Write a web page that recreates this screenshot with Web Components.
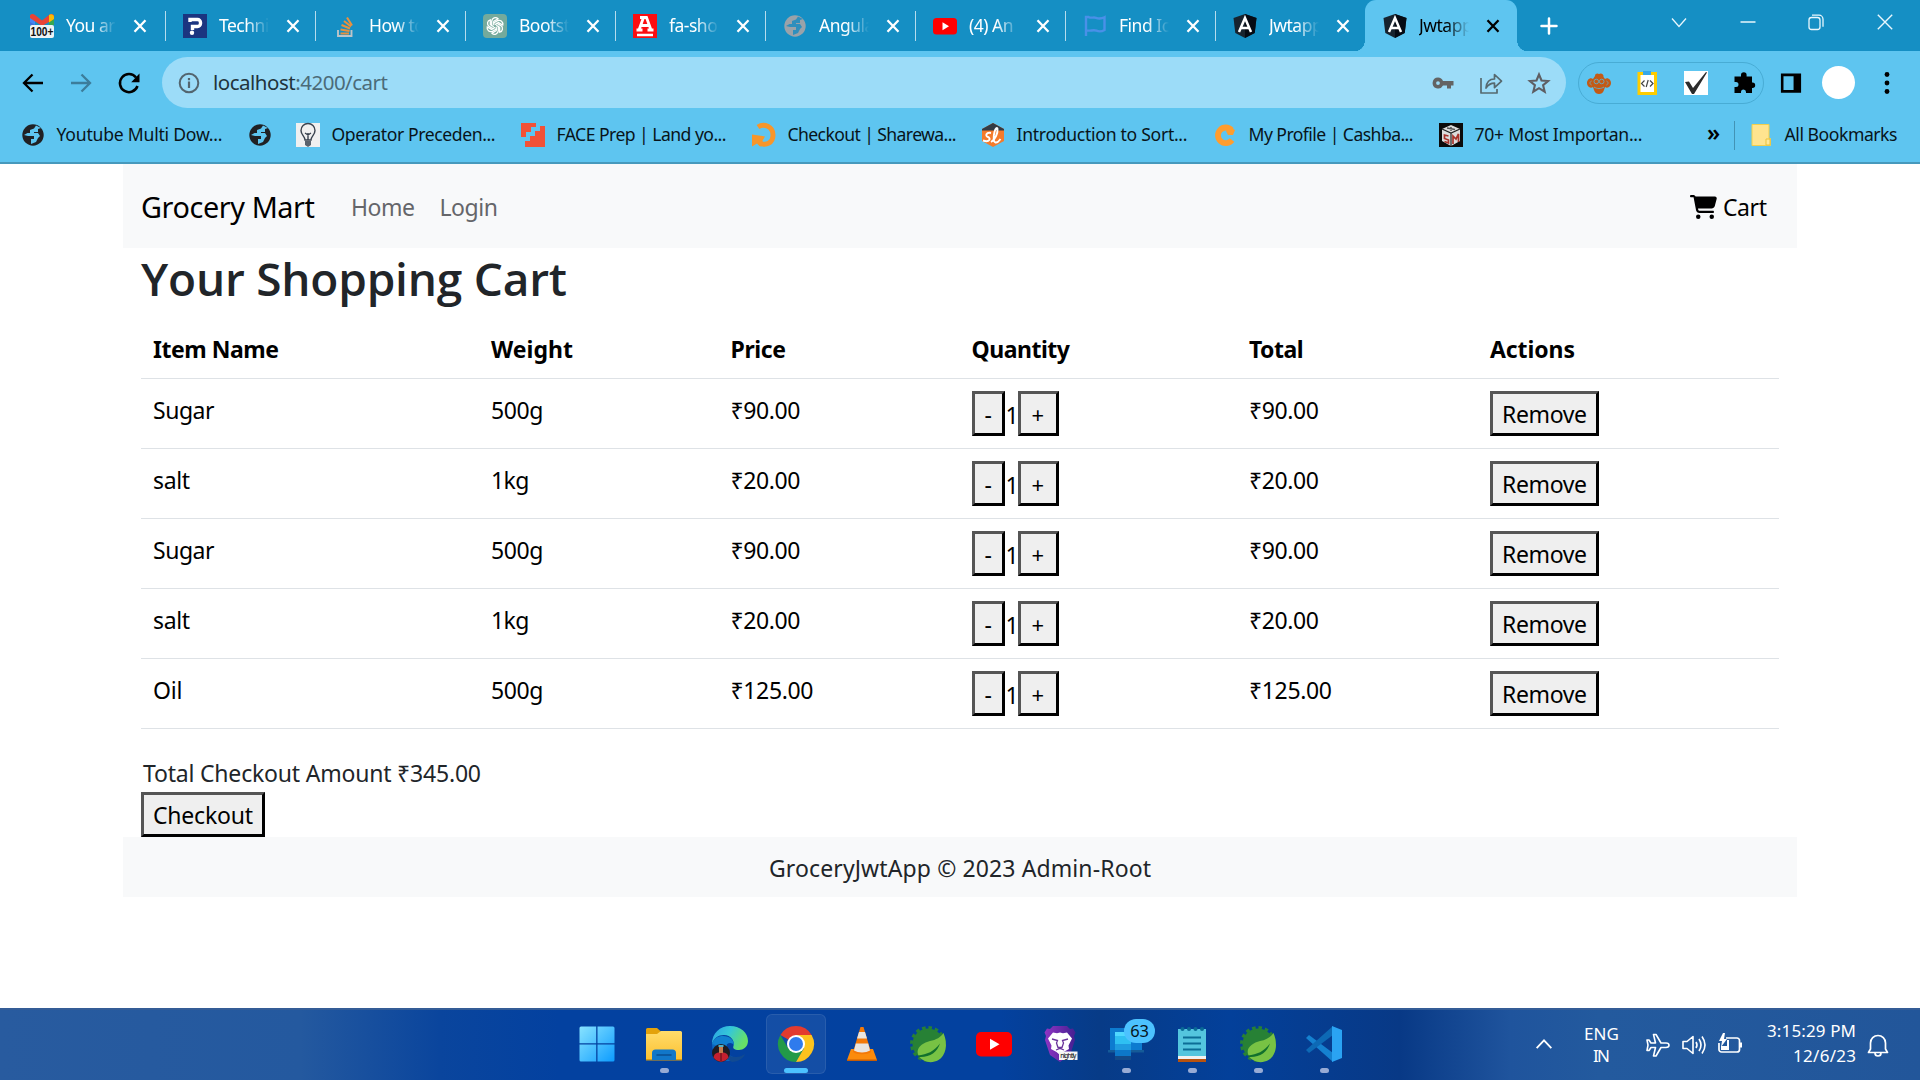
<!DOCTYPE html>
<html lang="en">
<head>
<meta charset="utf-8">
<title>Jwtapp</title>
<style>
html,body{margin:0;padding:0}
body{width:1920px;height:1080px;overflow:hidden;background:#fff;font-family:"Noto Sans","Open Sans",sans-serif;display:flex;flex-direction:column}
</style>
</head>
<body>
<browser-chrome></browser-chrome>
<shop-page></shop-page>
<task-bar></task-bar>
<script>
const PETAL = '<path d="M8.700 12.300V7.100a3.700 3.700 0 0 1 6.300-2.300l-4.200 2.500v4"/>';
const ICONS = {
gmail:`<path d="M0 2v9h5V6z" fill="#4285f4"/><path d="M24 2v9h-5V6z" fill="#34a853"/><path d="M0 8l5 3H0z" fill="#3f6fd8"/><path d="M0 1.500C1-.500 3.500-.500 5 1l7 5.500V12L0 4z" fill="#e94235"/><path d="M24 1.500C23-.500 20.500-.500 19 1l-7 5.500V12l12-7z" fill="#e94235"/><path d="M19 1c2-1.500 5-.500 5 2v2l-5 3.500z" fill="#fbbc04"/><rect y="11" width="24" height="13" rx="2" fill="#eef3f5"/><text x="12" y="22.300" font-size="13" font-family="Liberation Sans" font-weight="700" text-anchor="middle" textLength="23" lengthAdjust="spacingAndGlyphs" fill="#111">100+</text>`,
tech:`<rect width="24" height="24" fill="#1b3580"/><path d="M7 8V5.500h7.500a3 3 0 0 1 3 3v1a3 3 0 0 1-3 3H9.500v3.500" fill="none" stroke="#fff" stroke-width="3.400"/><circle cx="9" cy="18.800" r="2.200" fill="#fff"/>`,
stack:`<path d="M5 16v6h13.500V16" fill="none" stroke="#bcc4c8" stroke-width="1.900"/><g stroke="#e8913e" stroke-width="2.100"><path d="M7.500 19.500h8.500M7.500 15.500l9 1.500M8.500 11l8.500 3.500M11 7l7 5.500M14 3.500l5 8"/></g>`,
gpt:`<rect width="24" height="24" rx="4" fill="#74aa9c"/><g fill="none" stroke="#fff" stroke-width="1.300">${[0,60,120,180,240,300].map(a => `<g transform="rotate(${a} 12 12)">${PETAL}</g>`).join('')}</g>`,
fa:`<rect width="24" height="24" fill="#fb0d10"/><path d="M6 16L10.500 3.500h3L18 16M8 11.500h8M3.500 16h6M14.500 16h6M7 3.500h7" fill="none" stroke="#fff" stroke-width="2.800"/><path d="M4 21h16" stroke="#fff" stroke-width="2.500"/>`,
globeg:`<circle cx="12" cy="12" r="10.700" fill="#9aa2a9"/><path d="M15 2.500l-2 3-4 1.500v3H6.500l-3.500 2 4 1h6v3h-3v5l5-2 2-4 2-2-2-3h-4V9h4V6l3-1z" fill="#2f8fbd"/>`,
globe:`<circle cx="12" cy="12" r="10.700" fill="#202124"/><path d="M15 2.500l-2 3-4 1.500v3H6.500l-3.500 2 4 1h6v3h-3v5l5-2 2-4 2-2-2-3h-4V9h4V6l3-1z" fill="#5ec5f0"/>`,
yt:`<rect y="4" width="24" height="16.500" rx="3.500" fill="#f00"/><path d="M9.500 8.300l6.500 3.900-6.500 4z" fill="#fff"/>`,
flag:`<path d="M3 22V3h2.500c2.500 1.500 5 0 7.500.800 3 1.200 5.500 1 8.500-.500v12.700c-3 1.700-5.500 1.700-8 .700-3-1.200-6 .500-10-.200" fill="none" stroke="#4a90e8" stroke-width="2.400"/>`,
ang:`<path d="M12 0l11.500 4-1.800 15L12 24l-9.700-5L.500 4z" fill="#17232e"/><path d="M12 0l11.500 4-1.800 15L12 24z" fill="#050b14"/><path d="M6 18L12 4l6 14M8.500 14h7" fill="none" stroke="#fff" stroke-width="2.500"/>`,
x:`<path d="M6.500 6.200l11 11.600m0-11.600l-11 11.600" stroke="currentColor" stroke-width="2.300"/>`,
plus:`<path d="M12 3v18M3 12h18" stroke="#fff" stroke-width="3" stroke-linecap="round"/>`,
down:`<path d="M5 8.500l7 8 7-8" fill="none" stroke="#e9f7fd" stroke-width="1.300"/>`,
min:`<path d="M4.500 12h15" stroke="#e9f7fd" stroke-width="1.500"/>`,
max:`<rect x="5" y="7.500" width="11" height="12" rx="2.500" fill="none" stroke="#e9f7fd" stroke-width="1.300"/><path d="M8 5.200h7a4 4 0 0 1 4 4v7.500" fill="none" stroke="#e9f7fd" stroke-width="1.300"/>`,
wx:`<path d="M4.800 4.800l14.400 14.400m0-14.400L4.800 19.200" stroke="#e9f7fd" stroke-width="1.400"/>`,
back:`<path d="M22 12H3M11.500 3.500L3 12l8.500 8.500" fill="none" stroke="currentColor" stroke-width="2.300"/>`,
fwd:`<path d="M2 12h19M12.500 3.500L21 12l-8.500 8.500" fill="none" stroke="#3c7d9b" stroke-width="2.300"/>`,
reload:`<path d="M20.500 15A9 9 0 1 1 19 6.500" fill="none" stroke="#000" stroke-width="2.500"/><path d="M22.500 2.500v8.800h-8.300z"/>`,
info:`<circle cx="12" cy="12" r="9.300" fill="none" stroke="#53656f" stroke-width="2"/><path d="M12 10.500V17M12 7v2.200" stroke="#53656f" stroke-width="2.200"/>`,
key:`<path d="M7 6.500a5.500 5.500 0 1 0 5 8h4v3h4v-3h2.500v-4.500H12a5.500 5.500 0 0 0-5-3.500zm0 3.700a1.900 1.900 0 1 1 0 3.800 1.900 1.900 0 0 1 0-3.800z" fill="#636363" fill-rule="evenodd"/>`,
share:`<path d="M2 7v15h16v-4M7 17c.500-6.500 4-9 8.500-9V3.500l7 6.700-7 6.500v-4.500C11 12.300 9 14 7 17z" fill="none" stroke="#56696f" stroke-width="1.700" stroke-linejoin="round"/>`,
star:`<path d="M12 3.500l2.500 6 6.600.500-5 4.200 1.600 6.500-5.700-3.500-5.700 3.500 1.600-6.500-5-4.200 6.600-.500z" fill="none" stroke="#5e5e63" stroke-width="2.100"/>`,
monkey:`<g fill="#c35a15"><path d="M8 5c0-3 3-3 4-2 2-1.500 5 0 4.500 3l1.500 2c3-2 6 1 6 4s-3 6-6 4l-1 3c-1 3-3 4-5 4s-4-1-5-4l-1-3c-3 2-6-1-6-4s3-6 6-4z"/></g><g fill="none" stroke="#6fa5b5" stroke-width="1"><circle cx="9.300" cy="10.500" r="2.300"/><circle cx="14.700" cy="10.500" r="2.300"/><path d="M7 16c3 2 7 2 10 0"/><path d="M4.500 10c-2 1-2 3 0 4M19.500 10c2 1 2 3 0 4"/></g>`,
clip:`<rect x="2.500" y="1" width="19.500" height="23" fill="#fc0"/><rect x="5.500" y="4" width="13.500" height="17" fill="#fff"/><rect x="8" y="0" width="8" height="4" fill="#38a8e8"/><path d="M9.500 9.500L6.500 12.500l3 3M15 9.500l3 3-3 3M13.200 9l-2 7" fill="none" stroke="#444" stroke-width="1.200"/>`,
check:`<rect width="24" height="24" fill="#fff"/><path d="M1 11l4-.500L9 17 22 1l1 .500L10 23H8z" fill="#2b2b2b"/>`,
puzzle:`<path d="M9 4a2.800 2.800 0 0 1 5.600 0v1.500H20v6h.500a2.700 2.700 0 0 1 0 5.400H20V22h-6v-1a2.500 2.500 0 0 0-5 0v1H2.500v-6H4a2.500 2.500 0 0 0 0-5H2.500V5.500H9z"/>`,
side:`<path d="M1 1.500h22v21H1zM3.800 4.500v15h11v-15z" fill-rule="evenodd"/>`,
dots:`<circle cx="12" cy="3.500" r="2.400"/><circle cx="12" cy="12" r="2.400"/><circle cx="12" cy="20.500" r="2.400"/>`,
bulb:`<rect width="24" height="24" fill="#f0f0f0"/><path d="M9 17c0-4-4-5-4-9.500a7 7 0 0 1 14 0C19 12 15 13 15 17zM9.500 19h5M10 21.500h4M12 10v7M9 10l3 2 3-2" fill="none" stroke="#39424e" stroke-width="1.400"/><path d="M9 18h6v4l-3 2-3-2z" fill="#59616b"/>`,
face:`<path d="M0 0h15v4h-5v5H5v5H0z" fill="#f25137"/><path d="M24 3v21H4v-6h5v-5h5V8h5V3z" fill="#f25137"/>`,
shw:`<path d="M6 4C12 0 21 3.500 21 12c0 8-7 11-13 8" fill="none" stroke="#f7962a" stroke-width="5"/><path d="M0 11.500l13 2-3 5 3 4-5 1-3-3-5 3z" fill="#f7962a"/>`,
sort:`<path d="M12 0l11 6v12l-11 6-11-6V6z" fill="#f47b2b"/><path d="M12 0l11 6v1.500H1V6z" fill="#333b45"/><path d="M10 10c-5-1-6 3-3 4s2 6-5 3.500M10 19c4-2 7-9 6.500-13-.300-2-2-1-3 3s-1.500 10 1 10.500 3.500-1.500 5-3.500" fill="none" stroke="#fff" stroke-width="1.900"/>`,
cash:`<path d="M18.500 7a7.800 7.800 0 1 0 .500 10" fill="none" stroke="#ff9d2e" stroke-width="5.800"/><path d="M13 8l4-4 5 3-2 5h-5z" fill="#ff9d2e"/>`,
stm:`<rect width="24" height="24" fill="#0b0b0b"/><path d="M12 2l9 4v12l-9 5-9-5V6z" fill="#ddd"/><path d="M12 10v13M3 6l9 4 9-4" fill="none" stroke="#222" stroke-width="1.200"/><path d="M9.500 13l-4-1v3.500l4 1.500v3l-4-1.500M14 21v-8l3 3 2.500-5v8" stroke="#a9342c" stroke-width="1.700" fill="none"/><path d="M8 5l8 1.500M12 4v4" stroke="#555" stroke-width="1.500"/>`,
folder:`<path d="M3 1.500h17v14h1.500v7H3z" fill="#ffe48f" stroke="#f0cf4d"/><path d="M17 22v-6h4v6z" fill="#ffe89c" stroke="#e9c33a"/>`,
cart:`<path d="M0 24C0 10.700 10.700 0 24 0H69.500c22 0 41.500 12.800 50.600 32h411c26.300 0 45.500 25 38.600 50.400l-41 152.300c-8.500 31.400-37 53.300-69.500 53.300H170.700l5.400 28.500c2.200 11.300 12.100 19.500 23.600 19.500H488c13.300 0 24 10.700 24 24s-10.700 24-24 24H199.700c-34.600 0-64.300-24.600-70.700-58.500L77.400 54.500c-.700-3.800-4-6.500-7.900-6.500H24C10.700 48 0 37.300 0 24zM128 464a48 48 0 1 1 96 0 48 48 0 1 1-96 0zm336-48a48 48 0 1 1 0 96 48 48 0 1 1 0-96z"/>`,
win:`<defs><linearGradient id="a" gradientUnits="userSpaceOnUse" x2="36" y2="36"><stop stop-color="#8ae4ff"/><stop offset="1" stop-color="#0b9bff"/></linearGradient></defs><path d="M2 .500h15.200V17.200H.500V2A1.500 1.500 0 0 1 2 .500zM18.500.500H34A1.500 1.500 0 0 1 35.500 2v15.200h-17zM.500 18.500h16.700v17H2a1.500 1.500 0 0 1-1.500-1.500zM18.500 18.500h17V34a1.500 1.500 0 0 1-1.500 1.500H18.500z" fill="url(#a)"/>`,
files:`<defs><linearGradient id="a" x2="0" y2="1"><stop stop-color="#ffdc6b"/><stop offset="1" stop-color="#fcc131"/></linearGradient></defs><path d="M0 3.500A1.500 1.500 0 0 1 1.500 2H11l4.500 4-3 3H0z" fill="#e3a20b"/><path d="M0 8h11l4-3h19.500A1.500 1.500 0 0 1 36 6.500V34H0z" fill="url(#a)"/><path d="M0 33h36v1.500H0z" fill="#d99b12"/><path d="M6 34V27a3.500 3.500 0 0 1 3.500-3.500h17A3.500 3.500 0 0 1 30 27v7z" fill="#1177c9"/><path d="M11 29h14" stroke="#0a4f91" stroke-width="1.500" stroke-linecap="round"/>`,
edge:`<defs><linearGradient id="a" x2="1" y2=".4"><stop stop-color="#2aa0e6"/><stop offset=".5" stop-color="#35c7d8"/><stop offset="1" stop-color="#66e067"/></linearGradient></defs><path d="M9 16c8 0 6 5 6 8 0 5 6 8 11 7.500C20 38 0 36 0 18z" fill="#0c67c0"/><path d="M13 23c0 5 5 8 11 8 4 0 7-1.500 9-3-1 4-7 8-13 8-5-2-8-7-7-13z" fill="#114a92"/><path d="M0 18C0 7 8 0 18 0c11 0 18 7 18 15 0 6-5 9-9 9-5 0-6.500-2-5.500-4C23 15 19 9 12 9 6 9 2 12 0 18z" fill="url(#a)"/><path d="M0 18c2-6 6-8 11-8 7 0 11 4 11 9-2-3-8-3-9 3z" fill="#1180d0"/><circle cx="9" cy="27" r="9" fill="#201c20"/><path d="M1.500 31.500c1-5 4-5 7.500-5s6.500 0 7.500 5C13 37 5 37 1.500 31.500z" fill="#c4202f"/><path d="M7 20h4v7H7z" fill="#c67a4a"/><path d="M6.500 19h5v2h-5z" fill="#4fb0c8"/><path d="M9 27v8" stroke="#501018"/>`,
chrome:`<path d="M18 18L2.400 9A18 18 0 0 1 33.600 9z" fill="#e33b2e"/><path d="M2.400 9A18 18 0 0 0 18 36l7.800-13.500L18 18l-7.800 4.500z" fill="#229a48"/><path d="M18 9h15.600A18 18 0 0 1 18 36l7.800-13.500z" fill="#fcc31e"/><circle cx="18" cy="18" r="9" fill="#fff"/><circle cx="18" cy="18" r="7" fill="#2f7bed"/>`,
vlc:`<path d="M7 23h22l4 11H3z" fill="#fb8b0c"/><path d="M3 33.500h30V35H3z" fill="#c65c05"/><path d="M16.500 1h3L27 26c-3 3-15 3-18 0z" fill="#f37908"/><path d="M15 6h6l2 6.500H13zM11.800 17.500h12.400l1.800 7c-4 2.500-12 2.500-16 0z" fill="#e8e4e0"/>`,
spring:`<circle cx="18" cy="18" r="15.500" fill="#278135"/><circle cx="18" cy="18" r="16.300" fill="none" stroke="#278135" stroke-width="3.400" stroke-dasharray="3.500 2.900"/><path d="M33.500 7c5 12 2 23-5 27-7 4-15 2-19-3C4 23 12 17 20 15c6-1 11-4 13.500-8z" fill="#78c244"/><path d="M8 29.500c9-1 16-4 22-12-3 9-10 14-21 13.500z" fill="#12702d"/>`,
ytb:`<rect y="6" width="36" height="24.500" rx="5" fill="#f00"/><path d="M14 12.800l9.500 5.400-9.500 5.500z" fill="#fff"/>`,
brave:`<defs><linearGradient id="a" x2="1"><stop stop-color="#9035c4"/><stop offset="1" stop-color="#442091"/></linearGradient></defs><path d="M11 0h14l3 3 3-.500 2.500 4L32 10l1 4-5 15-10 7-10-7-5-15 1-4-1.500-3.500L5 2.500l3 .500z" fill="url(#a)"/><path d="M11 6.500l4 .800 3-.800 3 .800 4-.800 5 6-3.500 7 .500 3.500-5.500 3-3.500 3-3.500-3-5.500-3 .500-3.500-3.500-7z" fill="#fff"/><path d="M10 13l5.500 1.500L14.500 17l1.500 4.500h4l1.500-4.500-1-2.500L26 13M14 24l4-1.500 4 1.500" fill="none" stroke="#6a359b" stroke-width="1.300"/><rect x="17" y="25.500" width="18.500" height="8.500" fill="#f5f5f5"/><text x="26.300" y="31.700" font-size="6.500" textLength="16" text-anchor="middle" font-family="Noto Sans">nightly</text>`,
phone:`<path d="M2 2h32v24H2z" fill="#0d7bd0"/><path d="M0 24h36v2.500H0z" fill="#155b98"/><path d="M7 6h16v28H7z" fill="#2fc0f2"/><path d="M7 6h16v4H7z" fill="#4fd8ff"/><path d="M7 18h16v6H7z" fill="#1f9be0"/><path d="M7 24h16v6H7z" fill="#0d78c8"/><path d="M7 30h16v4H7z" fill="#134a88"/>`,
note:`<path d="M4 3h28v28H4z" fill="#54c5de"/><path d="M4 30h28v3H4z" fill="#f1f1f1"/><path d="M4 33h28v3H4z" fill="#b8520e"/><path d="M9 11.500h18M9 17.500h18M9 23.500h18" stroke="#0c6d96" stroke-width="2"/><g fill="#0a6a95"><circle cx="8.500" cy="3" r="2"/><circle cx="15" cy="3" r="2"/><circle cx="21.500" cy="3" r="2"/><circle cx="28" cy="3" r="2"/></g>`,
code:`<path d="M0 12l3-3 24 18v9z" fill="#1581d0"/><path d="M0 24l3 3L27 9V0z" fill="#0d69b5"/><path d="M26 0l10 4v28l-10 4z" fill="#2aa3f3"/>`,
up:`<path d="M4 16.500l8-8.500 8 8.500" fill="none" stroke="#fff" stroke-width="2"/>`,
plane:`<path d="M9.500 10L7.500 1.500h2.500L15 10h5c4 0 4 4.500 0 4.500h-5L10 23H7.500l2-8.500H5L3 17.500H1L2 12.200 1 7h2l2 3z" fill="none" stroke="#fff" stroke-width="1.600" stroke-linejoin="round"/>`,
vol:`<path d="M1 8.500h4L11 3.500v17L5 15.500H1z" fill="none" stroke="#fff" stroke-width="1.600" stroke-linejoin="round"/><path d="M14 9q2 3 0 6M17 6q4 6 0 12M20 3.500q6 8.500 0 17" fill="none" stroke="#fff" stroke-width="1.600"/>`,
batt:`<path d="M8 5h11a2.500 2.500 0 0 1 2.500 2.500v9A2.500 2.500 0 0 1 19 19H3.500A2.500 2.500 0 0 1 1 16.500V10" fill="none" stroke="#fff" stroke-width="1.700"/><path d="M3 13h6V7h2v10H3z" fill="#fff"/><path d="M5 0L1 8h3l-1 6 6-8H6l1-6z" fill="#fff"/><path d="M22 9.500h2v5h-2z" fill="#fff"/>`,
bell:`<path d="M2.500 19.500L4.500 16v-6a7.500 7.500 0 0 1 15 0v6l2 3.500zM9 20a3 3 0 0 0 6 0" fill="none" stroke="#fff" stroke-width="1.700" stroke-linejoin="round"/>`
};
const BOX = {cart:'0 0 576 512'};
['win','files','edge','chrome','vlc','spring','ytb','brave','phone','note','code'].forEach(n => BOX[n] = '0 0 36 36');

class UiIcon extends HTMLElement {
  connectedCallback() {
    if (this.shadowRoot) return;
    const n = this.getAttribute('name'), s = +(this.getAttribute('size') || 24);
    this.attachShadow({mode:'open'}).innerHTML = `<style>:host{display:block;flex:none;width:${s}px;height:${s}px}svg{display:block;width:100%;height:100%;overflow:visible}</style><svg viewBox="${BOX[n] || '0 0 24 24'}">${ICONS[n]}</svg>`;
  }
}
customElements.define('ui-icon', UiIcon);

/* A single line of text whose tracking is adjusted to fill the width in "w". */
class FitText extends HTMLElement {
  connectedCallback() {
    if (this.shadowRoot) return;
    const w = +this.getAttribute('w');
    this.attachShadow({mode:'open'}).innerHTML = `<style>:host{display:inline-block;flex:none;white-space:nowrap;width:${w}px}span{display:inline-block}</style><span><slot></slot></span>`;
    const s = this.shadowRoot.querySelector('span');
    const n = this.textContent.length;
    if (n > 1) s.style.letterSpacing = ((w - s.getBoundingClientRect().width) / (n - 1)) + 'px';
  }
}
customElements.define('fit-text', FitText);

class BrowserTab extends HTMLElement {
  connectedCallback() {
    if (this.shadowRoot) return;
    this.attachShadow({mode:'open'}).innerHTML = `<style>
:host{display:flex;align-items:center;box-sizing:border-box;width:150px;height:51px;padding-left:17px;color:#fff;position:relative}
:host(:first-child){width:151px;padding-left:15px}
:host(:not([active]):not([last]))::after{content:"";position:absolute;right:0;top:11px;width:1px;height:30px;background:#b5dced}
:host([last]){width:149px}
:host([active]){width:152px;background:#5ec5f0;border-radius:11px 11px 0 0;color:#000;padding-left:18px}
:host([active])::before,:host([active])::after{content:"";position:absolute;bottom:0;width:9px;height:11px}
:host([active])::before{left:-9px;background:radial-gradient(ellipse 9px 11px at 0 0,transparent 97%,#5ec5f0)}
:host([active])::after{right:-9px;background:radial-gradient(ellipse 9px 11px at 100% 0,transparent 97%,#5ec5f0)}
.t{width:50px;margin:-1px 12px 0 12px;overflow:hidden;white-space:nowrap;font-size:17.500px;letter-spacing:-.500px;line-height:30px;-webkit-mask-image:linear-gradient(90deg,#000 55%,transparent);mask-image:linear-gradient(90deg,#000 55%,transparent)}
</style><ui-icon name="${this.getAttribute('icon')}"></ui-icon><div class="t"><slot></slot></div><ui-icon name="x"></ui-icon>`;
  }
}
customElements.define('browser-tab', BrowserTab);

class BookmarkItem extends HTMLElement {
  connectedCallback() {
    if (this.shadowRoot) return;
    this.attachShadow({mode:'open'}).innerHTML = `<style>:host{display:flex;align-items:center;gap:11.500px;height:30px;font-size:17.600px;line-height:30px;color:#08141a}::slotted(fit-text){margin:-2px .500px 0 0}</style><ui-icon name="${this.getAttribute('icon')}"></ui-icon><slot></slot>`;
  }
}
customElements.define('bookmark-item', BookmarkItem);

class BrowserChrome extends HTMLElement {
  connectedCallback() {
    const tabs = [['gmail','You are'],['tech','Techni'],['stack','How to'],['gpt','Bootst'],['fa','fa-sho'],['globeg','Angula'],['yt','(4) An'],['flag','Find Ic'],['ang','Jwtapp'],['ang','Jwtapp']];
    const marks = [['globe','Youtube Multi Dow...',166,21],['globe','',0,248],['bulb','Operator Preceden...',164,296],['face','FACE Prep | Land yo...',170,521],['shw','Checkout | Sharewa...',169,752],['sort','Introduction to Sort...',171,981],['cash','My Profile | Cashba...',165,1213],['stm','70+ Most Importan...',168,1439]];
    let end = 0;
    const markup = marks.map(([i,t,w,x]) => {
      const m = x - end; end = x + 24 + (w ? 12 + w : 0);
      return `<bookmark-item icon="${i}" style="margin-left:${m}px">${w ? `<fit-text w="${w}">${t}</fit-text>` : ''}</bookmark-item>`;
    }).join('');
    this.attachShadow({mode:'open'}).innerHTML = `<style>
:host{display:block;flex:none;height:164px;box-sizing:border-box;background:#5ec5f0;border-bottom:2px solid #4799bc}
.tabs{display:flex;height:51px;background:#158fc4;padding-left:15px}
.wc{display:flex;flex:1;align-items:center}
.wc ui-icon{margin-top:-7px}
.bar{display:flex;align-items:center;height:51px;margin-top:6px;padding-left:21px}
.omni{display:flex;align-items:center;box-sizing:border-box;width:1404px;height:51px;border-radius:26px;background:#9cdcf8;margin-left:21px;padding:0 15px;font-size:20.500px;line-height:50px;color:#22343c}
.omni b{font-weight:400;color:#4b6b79}
.ext{display:flex;align-items:center;justify-content:space-between;box-sizing:border-box;width:186px;height:42px;border:1px solid #48acd5;border-radius:21px;margin-left:12px;padding:0 7px 0 8px}
.av{width:33px;height:33px;border-radius:50%;background:#fff;margin:0 20px 0 20px}
.marks{display:flex;align-items:center;height:54px}
.more{font-size:23px;font-weight:600;margin-left:64px;line-height:30px;width:15px;margin-top:-6px}
.sep{width:1px;height:29px;background:#4293b5;margin:0 14px 0 12px}
</style>
<div class="tabs">${tabs.map(([i,t],k) => `<browser-tab icon="${i}"${k===9?' active':''}${k===8?' last':''}>${t}</browser-tab>`).join('')}
<div class="wc"><ui-icon name="plus" size="20" style="margin:0 0 0 22px"></ui-icon><ui-icon name="down" style="margin-left:108px"></ui-icon><ui-icon name="min" style="margin-left:45px"></ui-icon><ui-icon name="max" style="margin-left:44px"></ui-icon><ui-icon name="wx" style="margin-left:45px"></ui-icon></div></div>
<div class="bar"><ui-icon name="back"></ui-icon><ui-icon name="fwd" style="margin-left:24px"></ui-icon><ui-icon name="reload" style="margin-left:24px"></ui-icon>
<div class="omni"><ui-icon name="info"></ui-icon><fit-text w="175" style="margin:-2px 0 0 12px">localhost<b>:4200/cart</b></fit-text><ui-icon name="key" style="margin-left:auto"></ui-icon><ui-icon name="share" style="margin-left:24px"></ui-icon><ui-icon name="star" style="margin-left:24px"></ui-icon></div>
<div class="ext"><ui-icon name="monkey"></ui-icon><ui-icon name="clip"></ui-icon><ui-icon name="check"></ui-icon><ui-icon name="puzzle"></ui-icon></div>
<ui-icon name="side" size="22" style="margin-left:16px"></ui-icon><div class="av"></div><ui-icon name="dots"></ui-icon></div>
<div class="marks">${markup}<div class="more">»</div><div class="sep"></div><bookmark-item icon="folder"><fit-text w="113">All Bookmarks</fit-text></bookmark-item></div>`;
  }
}
customElements.define('browser-chrome', BrowserChrome);

class CartButton extends HTMLElement {
  connectedCallback() {
    this.attachShadow({mode:'open'}).innerHTML = `<style>:host{display:inline-flex;box-sizing:border-box;height:45px;border:3px solid;border-color:#555 #000 #000 #555;background:#efefef;padding:0 9px;color:#000;line-height:40px}</style><slot></slot>`;
  }
}
customElements.define('cart-button', CartButton);

class CartRow extends HTMLElement {
  connectedCallback() {
    const [name,nw,wt,ww,price,pw] = this.getAttribute('item').split('|');
    this.attachShadow({mode:'open'}).innerHTML = `<style>
:host{display:grid;grid-template-columns:var(--cols);box-sizing:border-box;height:70px;border-bottom:1px solid #dee2e6;color:#000}
div{padding:12px 0 0 12px;line-height:38px;display:flex}
.n{margin:5px 4px 0 1px}
</style><div><fit-text w="${nw}">${name}</fit-text></div><div><fit-text w="${ww}">${wt}</fit-text></div><div><fit-text w="${pw}">${price}</fit-text></div>
<div><cart-button style="width:33px;padding-left:10px">-</cart-button><fit-text class="n" w="8">1</fit-text><cart-button style="width:41px;padding-left:11px;font-size:22px">+</cart-button></div>
<div><fit-text w="${pw}">${price}</fit-text></div><div><cart-button><fit-text w="85">Remove</fit-text></cart-button></div>`;
  }
}
customElements.define('cart-row', CartRow);

class ShopPage extends HTMLElement {
  connectedCallback() {
    const heads = [['Item Name',126],['Weight',82],['Price',55.5],['Quantity',98.5],['Total',54.5],['Actions',85]];
    const s = 'Sugar|61.5|500g|52.5|₹90.00|70', a = 'salt|37|1kg|38.5|₹20.00|70', o = 'Oil|29.5|500g|52.5|₹125.00|83';
    this.attachShadow({mode:'open'}).innerHTML = `<style>
:host{display:block;flex:none;height:844px;padding:0 123px;background:#fff;color:#212529;font-size:23px;--cols:338px 239.500px 241px 277.500px 241px 301px}
nav{display:flex;align-items:center;height:84px;box-sizing:border-box;background:#f8f9fa;padding:2px 30px 0 18px;color:#000;line-height:36px}
.brand{font-size:28.800px;line-height:44px}
.link{color:#65666a}
main{padding:0 18px}
h2{margin:0;height:77px;font-size:46px;line-height:61px;font-weight:600;font-family:"Open Sans","Noto Sans",sans-serif}
.th{display:grid;grid-template-columns:var(--cols);height:53px;border-bottom:1px solid #dee2e6;font-weight:700;color:#000;line-height:49px}
.th div{padding-left:12px}
p{margin:26px 0 0 2px;height:37px;line-height:36px}
p+cart-button{display:flex;width:124px}
footer{height:60px;background:#f8f9fa;text-align:center;line-height:62px}
</style>
<nav><fit-text class="brand" w="174">Grocery Mart</fit-text><fit-text class="link" w="64" style="margin-left:36px">Home</fit-text><fit-text class="link" w="58.500" style="margin-left:24.500px">Login</fit-text><ui-icon name="cart" size="27" style="height:24px;margin-left:auto"></ui-icon><fit-text w="44" style="margin-left:6px">Cart</fit-text></nav>
<main><h2><fit-text w="426">Your Shopping Cart</fit-text></h2>
<div class="th">${heads.map(([t,w]) => `<div><fit-text w="${w}">${t}</fit-text></div>`).join('')}</div>
${[s,a,s,a,o].map(r => `<cart-row item="${r}"></cart-row>`).join('')}
<p><fit-text w="338">Total Checkout Amount ₹345.00</fit-text></p><cart-button><fit-text w="100">Checkout</fit-text></cart-button></main>
<footer><fit-text w="382">GroceryJwtApp © 2023 Admin-Root</fit-text></footer>`;
  }
}
customElements.define('shop-page', ShopPage);

class TaskBar extends HTMLElement {
  connectedCallback() {
    const apps = [['win'],['files','d'],['edge'],['chrome','on'],['vlc'],['spring'],['ytb'],['brave'],['phone','d'],['note','d'],['spring','d'],['code','d']];
    this.attachShadow({mode:'open'}).innerHTML = `<style>
:host{display:flex;flex:none;box-sizing:border-box;height:72px;border-top:2px solid #345c96;color:#fff;background:linear-gradient(90deg,#285b9f 0,#24599f 300px,#0a459d 440px,#0341a0 560px,#03419f 1000px,#073b87 1100px,#03409a 1230px,#083986 1400px,#1f549d 1510px,#235a9e 1600px,#22569a 1920px)}
.apps{display:flex;padding-left:564px;width:792px;flex:none}
.app{position:relative;width:66px;height:70px;display:flex;justify-content:center;padding:16px 0 0;box-sizing:border-box}
.app:not(:first-child){padding-left:1.500px}
.on::before{content:"";position:absolute;inset:4px 2px 6px 4px;border-radius:6px;background:#ffffff12;box-shadow:inset 0 0 0 1px #ffffff16}
.on ui-icon{position:relative}
.d::after,.on::after{content:"";position:absolute;left:30px;top:58px;width:9px;height:5px;border-radius:3px;background:#97abd5}
.on::after{left:22px;width:24px;background:#4cc2ff}
.badge{position:absolute;left:32px;top:9px;width:31px;height:24px;border-radius:12px;background:#4cc2ff;color:#06141c;font-size:16.500px;line-height:23px;text-align:center;letter-spacing:-.300px}
.tray{display:flex;flex:1;align-items:center;font-size:17px;line-height:24.500px}
.c{display:flex;flex-direction:column;align-items:center}
</style><div class="apps">${apps.map(([n,c]) => `<div class="app ${c||''}"><ui-icon name="${n}" size="36"></ui-icon>${n==='phone'?'<div class="badge">63</div>':''}</div>`).join('')}</div>
<div class="tray"><ui-icon name="up" size="22" style="margin-left:177px;margin-top:-2px"></ui-icon>
<div class="c" style="margin-left:29px;line-height:22.500px"><fit-text w="35">ENG</fit-text><fit-text w="17">IN</fit-text></div>
<ui-icon name="plane" style="margin:-1px 0 0 27px"></ui-icon><ui-icon name="vol" style="margin:-1px 0 0 12px"></ui-icon><ui-icon name="batt" style="margin:-1px 0 0 12px"></ui-icon>
<div class="c" style="margin:-3px 0 0 25px;align-items:flex-end"><fit-text w="89">3:15:29 PM</fit-text><fit-text w="63">12/6/23</fit-text></div><ui-icon name="bell" style="margin:-1px 0 0 10px"></ui-icon></div>`;
  }
}
customElements.define('task-bar', TaskBar);
</script>
</body>
</html>
